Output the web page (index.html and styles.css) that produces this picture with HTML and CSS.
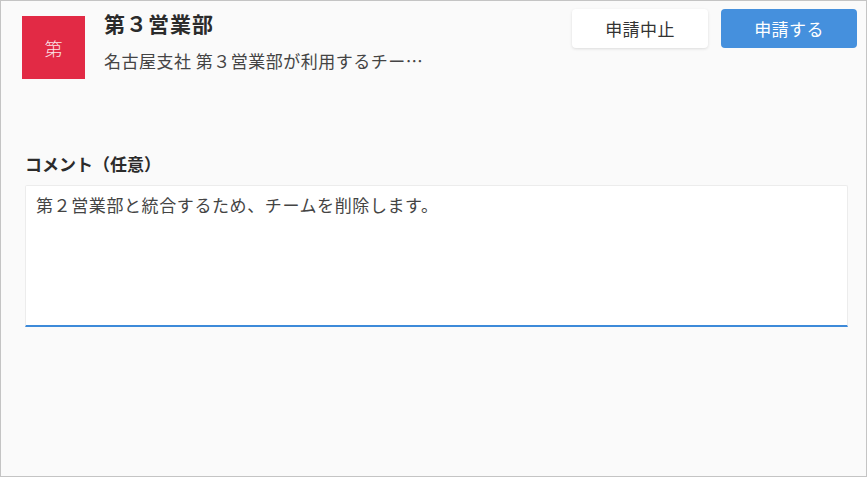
FILE: index.html
```html
<!DOCTYPE html>
<html lang="ja">
<head>
<meta charset="utf-8">
<link rel="stylesheet" href="styles.css">
</head>
<body>
<div class="frame">
  <header class="head">
    <div class="avatar">第</div>
    <div class="info">
      <div class="title">第３営業部</div>
      <div class="desc">名古屋支社 第３営業部が利用するチー…</div>
    </div>
    <div class="actions">
      <button class="btn btn-plain">申請中止</button>
      <button class="btn btn-primary">申請する</button>
    </div>
  </header>
  <section class="comment">
    <div class="label">コメント（任意）</div>
    <div class="textarea">第２営業部と統合するため、チームを削除します。</div>
  </section>
</div>
</body>
</html>
```
FILE: styles.css
```css
* { box-sizing: border-box; }
html, body { margin: 0; padding: 0; }
body {
  font-family: "Noto Sans CJK JP", "Noto Sans", sans-serif;
  color: #333;
}
.frame {
  width: 867px;
  height: 477px;
  border: 1px solid #c4c4c4;
  background: #fafafa;
  padding: 8px 9px 0 21px;
}
.head {
  display: flex;
  align-items: flex-start;
}
.avatar {
  width: 63px;
  height: 63px;
  margin-top: 7px;
  background: #e22a45;
  color: #fbe3e7;
  font-size: 18px;
  font-weight: 300;
  display: flex;
  align-items: center;
  justify-content: center;
}
.info {
  margin-left: 19px;
  flex: 1;
}
.title {
  font-size: 21px;
  font-weight: 700;
  letter-spacing: 1px;
  line-height: 26px;
  margin-top: 1px;
  color: #2b2b2b;
}
.desc {
  font-size: 17px;
  letter-spacing: 0.5px;
  line-height: 22px;
  margin-top: 14px;
  color: #444;
}
.actions {
  display: flex;
  gap: 13px;
}
.btn {
  width: 136px;
  height: 39px;
  border: none;
  border-radius: 4px;
  font-family: inherit;
  font-size: 17px;
  letter-spacing: 0.4px;
  padding: 0;
}
.btn-plain {
  background: #fff;
  color: #333;
  box-shadow: 0 1px 3px rgba(0,0,0,0.12);
}
.btn-primary {
  background: #4590dd;
  color: #fff;
}
.comment {
  margin-top: 75px;
  padding-left: 3px;
  padding-right: 9px;
}
.label {
  font-size: 17px;
  font-weight: 700;
  line-height: 20px;
  color: #2b2b2b;
  letter-spacing: 0;
}
.textarea {
  margin-top: 11px;
  height: 142px;
  background: #fff;
  border: 1px solid #ececec;
  border-bottom: 2px solid #3d8ad9;
  border-radius: 2px 2px 0 0;
  padding: 8px 10px;
  font-size: 17px;
  line-height: 22px;
  letter-spacing: 0.6px;
  color: #444;
}
```
